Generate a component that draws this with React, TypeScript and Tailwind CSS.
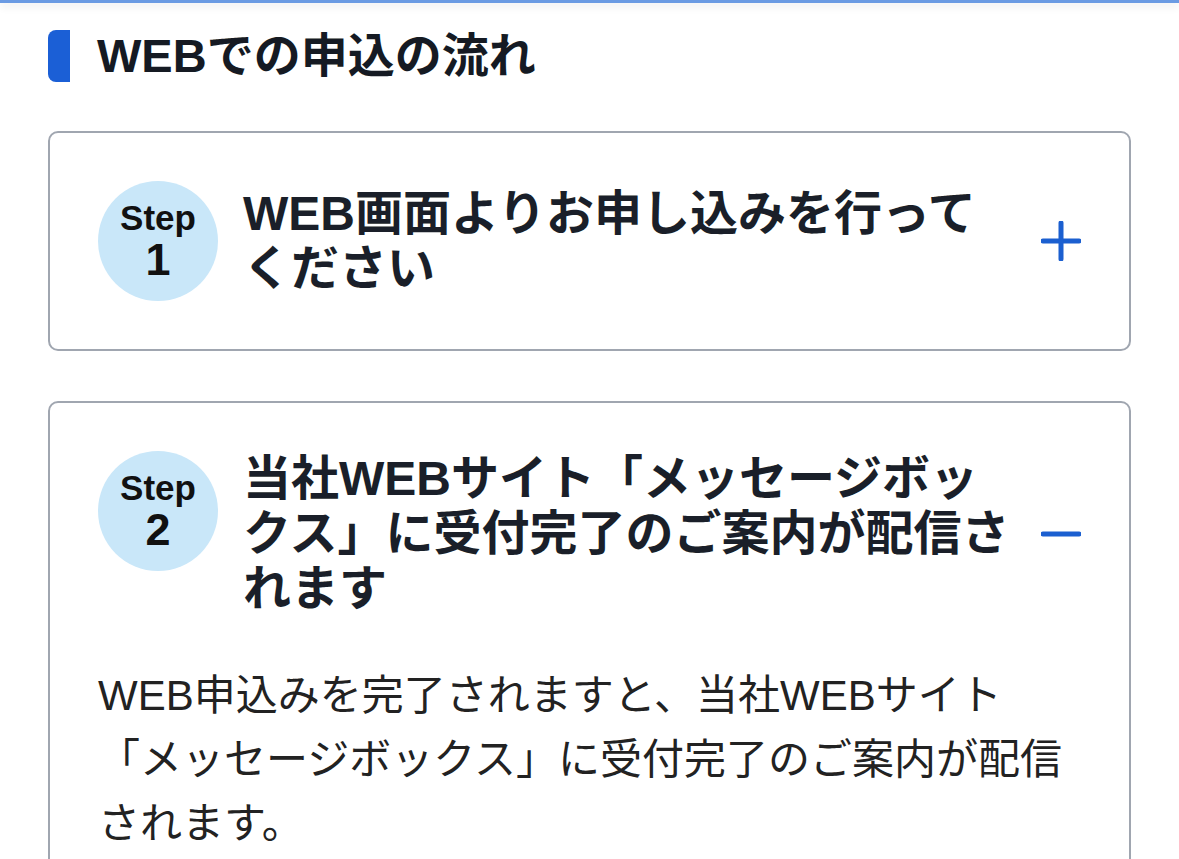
import { useState } from "react";

type Step = {
  no: number;
  title: string;
  body?: string;
};

const steps: Step[] = [
  { no: 1, title: "WEB画面よりお申し込みを行ってください" },
  {
    no: 2,
    title: "当社WEBサイト「メッセージボックス」に受付完了のご案内が配信されます",
    body: "WEB申込みを完了されますと、当社WEBサイト「メッセージボックス」に受付完了のご案内が配信されます。",
  },
];

function ToggleIcon({ open }: { open: boolean }) {
  return (
    <svg width="40" height="40" viewBox="0 0 40 40" className="shrink-0">
      <line x1="2" y1="20" x2="38" y2="20" stroke="#1b5fd0" strokeWidth="5" strokeLinecap="round" />
      {!open && (
        <line x1="20" y1="2" x2="20" y2="38" stroke="#1b5fd0" strokeWidth="5" strokeLinecap="round" />
      )}
    </svg>
  );
}

export default function App() {
  const [openStep, setOpenStep] = useState<number | null>(2);

  return (
    <div
      className="min-h-screen bg-white text-[#1a1f29]"
      style={{ fontFamily: '"Liberation Sans", "Noto Sans CJK JP", sans-serif' }}
    >
      <div className="h-[3px] bg-[#6b9be3] shadow-[0_3px_8px_rgba(0,0,0,0.12)]" />

      <div className="px-[48px] pt-[25px]">
        <h2 className="flex items-center gap-[27px]">
          <span className="block h-[52px] w-[22px] rounded-l-[8px] bg-[#1b5fd6]" />
          <span className="text-[47px] font-bold leading-[56px] text-[#151a23]">WEBでの申込の流れ</span>
        </h2>

        <ul className="mt-[47px] space-y-[50px]">
          {steps.map((s) => {
            const isOpen = openStep === s.no;
            return (
              <li key={s.no} className="rounded-[10px] border-2 border-[#a0a6b0] bg-white">
                <button
                  type="button"
                  onClick={() => setOpenStep(isOpen ? null : s.no)}
                  className="flex w-full items-center justify-between px-[48px] py-[48px] text-left"
                >
                  <span className="flex items-center">
                    <span className="flex h-[120px] w-[120px] shrink-0 flex-col items-center justify-center self-start rounded-full bg-[#c9e7f9] text-[#111]">
                      <span className="text-[35px] font-bold leading-[38px]">Step</span>
                      <span className="text-[45px] font-bold leading-[46px]">{s.no}</span>
                    </span>
                    <span className="ml-[25px] w-[767px] text-[48px] font-bold leading-[55px] text-[#1a1f29]">
                      {s.title}
                    </span>
                  </span>
                  <ToggleIcon open={isOpen} />
                </button>
                {isOpen && s.body && (
                  <p className="px-[48px] pb-[48px] text-[42px] leading-[64px] text-[#222]">{s.body}</p>
                )}
              </li>
            );
          })}
        </ul>
      </div>
    </div>
  );
}
